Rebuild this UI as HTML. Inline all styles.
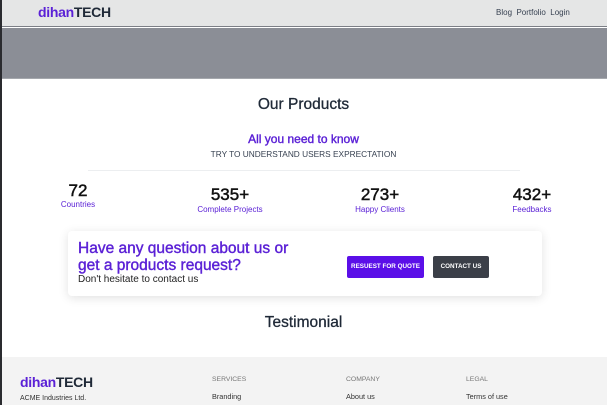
<!DOCTYPE html>
<html><head><meta charset="utf-8"><style>
*{margin:0;padding:0;box-sizing:border-box}
body{width:607px;height:405px;overflow:hidden;background:#fff;font-family:"Liberation Sans",sans-serif;position:relative;color:#1f2937}
.a{position:absolute;white-space:nowrap}
.p{color:#5b21d6}
</style></head><body>
<div class="a" style="left:0;top:0;width:2px;height:405px;background:#2a2b2f;z-index:5"></div>
<div class="a" style="left:2px;top:0;width:605px;height:27px;background:#e5e6e6;border-bottom:1px solid #7c7f86"></div>
<div class="a" style="left:38px;top:4px;font-size:14px;font-weight:bold;letter-spacing:-0.3px"><span class="p">dihan</span><span style="color:#1f2937">TECH</span></div>
<div class="a" style="left:496px;top:8px;font-size:8px;color:#374151">Blog&nbsp; Portfolio&nbsp; Login</div>
<div class="a" style="left:2px;top:28px;width:605px;height:51px;background:#8b8e96;border-bottom:1px solid #a5a8ad"></div>
<div class="a" style="left:0;width:607px;top:96px;text-align:center;font-size:15.5px;color:#1f2937;-webkit-text-stroke:0.3px #1f2937">Our Products</div>
<div class="a p" style="left:0;width:607px;top:132px;text-align:center;font-size:12px;color:#5b21d6;-webkit-text-stroke:0.4px #5b21d6">All you need to know</div>
<div class="a" style="left:0;width:607px;top:149px;text-align:center;font-size:8.3px;color:#374151">TRY TO UNDERSTAND USERS EXPRECTATION</div>
<div class="a" style="left:88px;top:170px;width:432px;height:1px;background:#eceef0"></div>
<div class="a" style="left:58px;width:40px;top:181px;text-align:center;font-size:17px;color:#111;-webkit-text-stroke:0.5px #111">72</div>
<div class="a p" style="left:52px;width:52px;top:200px;text-align:center;font-size:8px">Countries</div>
<div class="a" style="left:185px;width:90px;top:185px;text-align:center;font-size:17px;color:#111;-webkit-text-stroke:0.5px #111">535+</div>
<div class="a p" style="left:185px;width:90px;top:205px;text-align:center;font-size:8px">Complete Projects</div>
<div class="a" style="left:340px;width:80px;top:185px;text-align:center;font-size:17px;color:#111;-webkit-text-stroke:0.5px #111">273+</div>
<div class="a p" style="left:340px;width:80px;top:205px;text-align:center;font-size:8px">Happy Clients</div>
<div class="a" style="left:502px;width:60px;top:185px;text-align:center;font-size:17px;color:#111;-webkit-text-stroke:0.5px #111">432+</div>
<div class="a p" style="left:502px;width:60px;top:205px;text-align:center;font-size:8px">Feedbacks</div>
<div class="a" style="left:68px;top:231px;width:474px;height:65px;background:#fff;border-radius:4px;box-shadow:0 2px 10px rgba(0,0,0,.12)"></div>
<div class="a p" style="left:78px;top:240px;font-size:15.5px;line-height:17px;-webkit-text-stroke:0.4px #5b21d6">Have any question about us or<br>get a products request?</div>
<div class="a" style="left:78px;top:274px;font-size:10px;color:#222">Don't hesitate to contact us</div>
<div class="a" style="left:347px;top:256px;width:77px;height:22px;background:#5b0fe8;border-radius:2px;color:#fff;font-size:6.3px;font-weight:bold;text-align:center;line-height:22px">RESUEST FOR QUOTE</div>
<div class="a" style="left:433px;top:256px;width:56px;height:22px;background:#3b3f48;border-radius:2px;color:#fff;font-size:6.3px;font-weight:bold;text-align:center;line-height:22px">CONTACT US</div>
<div class="a" style="left:0;width:607px;top:314px;text-align:center;font-size:15.5px;color:#1f2937;-webkit-text-stroke:0.3px #1f2937">Testimonial</div>
<div class="a" style="left:2px;top:357px;width:605px;height:48px;background:#f3f3f3"></div>
<div class="a" style="left:20px;top:374px;font-size:14px;font-weight:bold;letter-spacing:-0.3px"><span class="p">dihan</span><span style="color:#1f2937">TECH</span></div>
<div class="a" style="left:20px;top:395px;font-size:7px;color:#333">ACME Industries Ltd.</div>
<div class="a" style="left:212px;top:376px;font-size:6.8px;color:#777">SERVICES</div>
<div class="a" style="left:212px;top:392px;font-size:7.3px;color:#333">Branding</div>
<div class="a" style="left:346px;top:376px;font-size:6.8px;color:#777">COMPANY</div>
<div class="a" style="left:346px;top:392px;font-size:7.3px;color:#333">About us</div>
<div class="a" style="left:466px;top:376px;font-size:6.8px;color:#777">LEGAL</div>
<div class="a" style="left:466px;top:392px;font-size:7.3px;color:#333">Terms of use</div>
</body></html>
